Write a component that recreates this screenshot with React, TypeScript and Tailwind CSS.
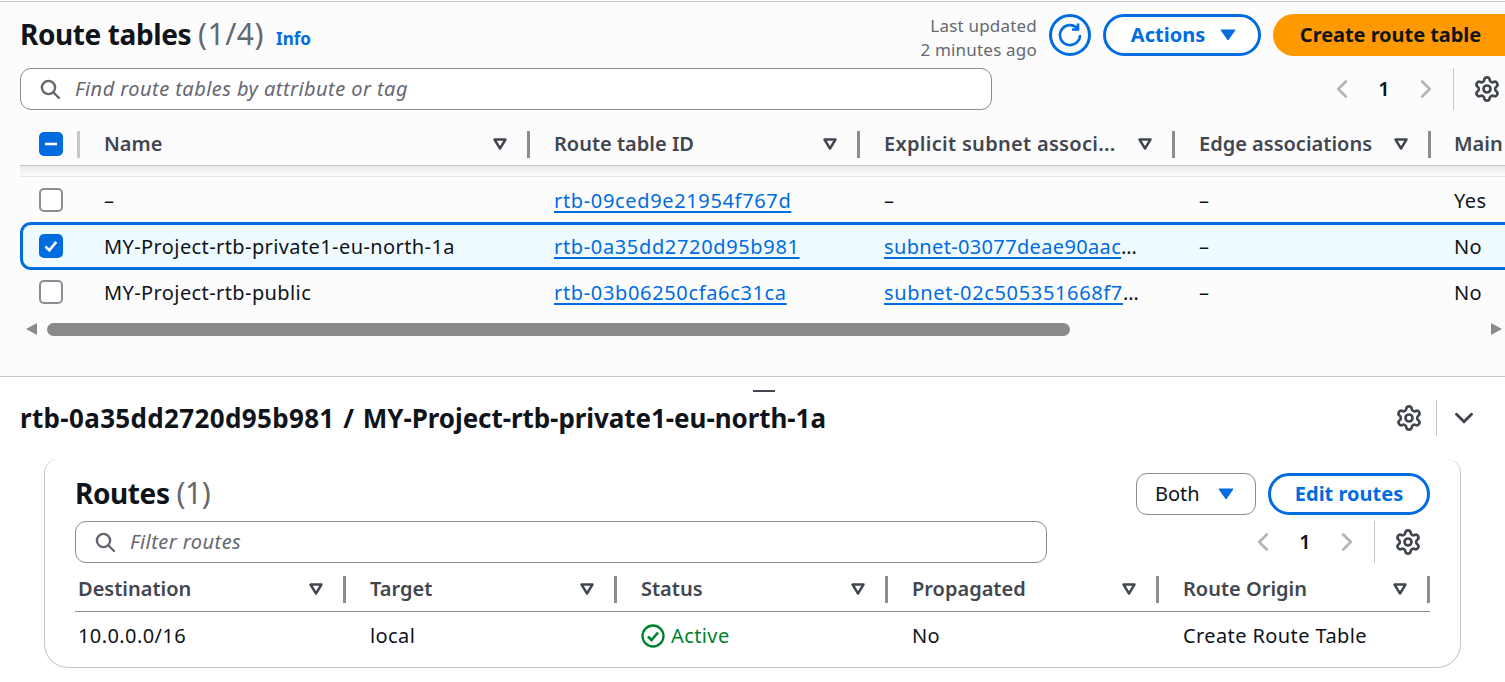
import { ChevronDown, ChevronLeft, ChevronRight, Settings } from "lucide-react";

const font = { fontFamily: '"Noto Sans", "Open Sans", sans-serif' };

function SearchIcon() {
  return (
    <svg width="22" height="22" viewBox="0 0 22 22" fill="none" stroke="#656871" strokeWidth="2.4">
      <circle cx="9.5" cy="9.5" r="6.6" />
      <path d="M14.5 14.5l5.5 5.5" strokeLinecap="round" />
    </svg>
  );
}

function SortCaret() {
  return (
    <svg width="14" height="12" viewBox="0 0 14 12" className="mb-[2px] shrink-0">
      <path d="M1.5 1.5h11L7 10.5z" fill="none" stroke="#424650" strokeWidth="2.4" strokeLinejoin="round" />
    </svg>
  );
}

function DropCaret() {
  return (
    <svg width="16" height="12" viewBox="0 0 16 12" className="shrink-0">
      <path d="M1 1h14L8 11z" fill="#006ce0" stroke="#006ce0" strokeLinejoin="round" />
    </svg>
  );
}

function Gear() {
  return <Settings size={28} strokeWidth={2.3} color="#424650" />;
}

function Pager() {
  return (
    <div className="flex items-center">
      <ChevronLeft size={30} strokeWidth={2.2} color="#b4b4bb" />
      <span className="w-[54px] text-center text-[20px] font-semibold text-[#0f141a]">1</span>
      <ChevronRight size={30} strokeWidth={2.2} color="#b4b4bb" />
    </div>
  );
}

function Check({ state }: { state?: "on" | "mixed" }) {
  if (!state) {
    return <span className="block h-6 w-6 rounded-[5px] border-2 border-[#8c8c94] bg-white" />;
  }
  return (
    <span className="flex h-6 w-6 items-center justify-center rounded-[5px] bg-[#006ce0]">
      <svg width="16" height="16" viewBox="0 0 16 16" fill="none" stroke="white" strokeWidth="2.6">
        {state === "on" ? <path d="M2.5 8.5l3.8 3.8 7-8.5" /> : <path d="M2 8h12" />}
      </svg>
    </span>
  );
}

function HeadCell({ label, className }: { label: string; className: string }) {
  return (
    <div className={`flex h-[27px] items-center justify-between border-r-[3px] border-[#8c8c94] pr-[20px] ${className}`}>
      <span className="mb-[2px] truncate text-[20px] font-semibold text-[#424650]">{label}</span>
      <SortCaret />
    </div>
  );
}

function A({ children, className = "tracking-[0.65px]" }: { children: string; className?: string }) {
  return (
    <span className={`block truncate ${className}`}>
      <span className="text-[#006ce0] underline underline-offset-[3px]">{children}</span>
    </span>
  );
}

const topCols = "grid grid-cols-[60px_450px_330px_315px_256px_1fr]";
const selectedCols = "grid grid-cols-[57px_450px_330px_315px_256px_1fr]";

function Row({ check, name, id, subnet, main, selected }: {
  check?: "on" | "mixed";
  name: string;
  id: string;
  subnet: string;
  main: string;
  selected?: boolean;
}) {
  return (
    <div
      className={`items-center text-[20px] tracking-[0.4px] text-[#0f141a] ${
        selected
          ? `${selectedCols} relative -my-px h-[48px] rounded-l-[11px] border-y-[3px] border-l-[3px] border-[#006ce0] bg-[#f0fbff]`
          : `${topCols} h-[46px]`
      }`}
    >
      <div className={selected ? "pl-[16px]" : "pl-[19px]"}><Check state={check} /></div>
      <div className="pl-[24px] pt-[2px]">{name}</div>
      <div className="pl-[24px] pt-[2px]">{id.startsWith("rtb") ? <A>{id}</A> : id}</div>
      <div className="pl-[24px] pr-[29px] pt-[2px]">
        {subnet.startsWith("subnet") ? <A className={selected ? "tracking-[0.35px]" : "tracking-[0.65px]"}>{subnet}</A> : subnet}
      </div>
      <div className="pl-[24px] pt-[2px]">–</div>
      <div className="pl-[23px] pt-[2px]">{main}</div>
    </div>
  );
}

const routeCols = "grid grid-cols-[271px_271px_271px_271px_271px]";

export default function App() {
  return (
    <div className="h-[682px] w-[1505px] overflow-hidden bg-white" style={font}>
      {/* top panel */}
      <div className="mt-px h-[376px] border-y border-[#c6c6cd] bg-[#fcfcfc]">
        <div className="flex h-[66px] items-start pl-5 pt-3">
          <h1 className="text-[28px] leading-[40px] font-bold tracking-[-0.4px] text-[#0f141a]">
            Route tables <span className="text-[30px] font-normal tracking-[0.5px] text-[#656871]">(1/4)</span>
          </h1>
          <span className="ml-3 mt-[13px] text-[17px] leading-[24px] font-bold text-[#006ce0]">Info</span>
          <div className="ml-auto flex items-start">
            <div className="text-right text-[17px] leading-[24px] tracking-[0.2px] text-[#656871]">
              <div>Last updated</div>
              <div>2 minutes ago</div>
            </div>
            <div className="ml-3 flex h-[42px] w-[42px] items-center justify-center rounded-full border-[3px] border-[#006ce0]">
              <svg width="26" height="26" viewBox="0 0 26 26" fill="none" stroke="#006ce0" strokeWidth="2.6">
                <path d="M20.5 6.5A10 10 0 1 0 23 13" />
                <path d="M21 1.5v6h-6" />
              </svg>
            </div>
            <div className="ml-3 flex h-[42px] w-[158px] items-center justify-center gap-[15px] rounded-full border-[3px] border-[#006ce0] bg-white pl-[3px] text-[20px] font-bold text-[#006ce0]">
              Actions
              <DropCaret />
            </div>
            <div className="ml-3 flex h-[42px] w-[232px] items-center justify-center rounded-l-full bg-[#ff9900] pl-[3px] text-[20px] font-bold tracking-[-0.05px] text-[#0f141a]">
              Create route table
            </div>
          </div>
        </div>

        <div className="flex h-[42px] items-center pl-5">
          <div className="flex h-[42px] w-[972px] items-center gap-[14px] rounded-[11px] border border-[#8c8c94] bg-white pl-[18px]">
            <SearchIcon />
            <span className="text-[20px] tracking-[0.45px] italic text-[#656871]">Find route tables by attribute or tag</span>
          </div>
          <div className="ml-[335px]"><Pager /></div>
          <div className="ml-[12px] h-[42px] border-l border-[#c6c6cd]" />
          <div className="ml-[19px]"><Gear /></div>
        </div>

        {/* table head */}
        <div className={`${topCols} ml-5 mt-[21px] h-[34px] items-start`}>
          <div className="flex h-[27px] items-center justify-between border-r-[3px] border-[#c6c6cd] pl-[19px]">
            <span className="mb-[2px]"><Check state="mixed" /></span>
          </div>
          <div className="pl-[24px]"><HeadCell label="Name" className="" /></div>
          <div className="pl-[24px]"><HeadCell label="Route table ID" className="" /></div>
          <div className="pl-[24px]"><HeadCell label="Explicit subnet associ..." className="tracking-[0.3px]" /></div>
          <div className="pl-[24px]"><HeadCell label="Edge associations" className="" /></div>
          <div className="pl-[23px]"><span className="text-[20px] leading-[25px] font-semibold text-[#424650]">Main</span></div>
        </div>
        <div className="ml-5 h-[12px] border-y border-t-[#c6c6cd] border-b-[#e8e8ec] bg-gradient-to-b from-[#e9e9ec] to-[#fcfcfc]" />

        <div className="ml-5">
          <Row name="–" id="rtb-09ced9e21954f767d" subnet="–" main="Yes" />
          <Row check="on" selected name="MY-Project-rtb-private1-eu-north-1a" id="rtb-0a35dd2720d95b981" subnet="subnet-03077deae90aac4d1f8e" main="No" />
          <Row name="MY-Project-rtb-public" id="rtb-03b06250cfa6c31ca" subnet="subnet-02c505351668f7a2b9c1" main="No" />
        </div>

        {/* scrollbar */}
        <div className="mt-[7px] flex h-[14px] items-center pl-[26px] pr-[3px]">
          <svg width="11" height="14" viewBox="0 0 11 14"><path d="M11 1v12L0 7z" fill="#8a8a8a" /></svg>
          <div className="ml-[10px] h-[13px] w-[1023px] rounded-full bg-[#8a8a8a]" />
          <svg width="11" height="14" viewBox="0 0 11 14" className="ml-auto"><path d="M0 1v12l11-6z" fill="#8a8a8a" /></svg>
        </div>
      </div>

      {/* split panel */}
      <div className="relative h-[305px]">
        <span className="absolute left-[753px] top-[13px] h-[2px] w-[22px] bg-[#424650]" />
        <div className="flex h-[82px] items-center pl-5 pr-[26px]">
          <h2 className="text-[26px] font-bold text-[#0f141a]">
            <span className="tracking-[0.34px]">rtb-0a35dd2720d95b981</span>
            <span className="mx-[2px] tracking-[-0.06px]"> / </span>
            <span className="tracking-[-0.06px]">MY-Project-rtb-private1-eu-north-1a</span>
          </h2>
          <div className="ml-auto"><Gear /></div>
          <div className="ml-[13px] h-[36px] border-l border-[#c6c6cd]" />
          <ChevronDown size={30} strokeWidth={2.3} color="#424650" className="ml-[12px]" />
        </div>

        <div className="ml-[44px] h-[209px] w-[1417px] rounded-b-[24px] rounded-t-[14px] border border-t-0 border-[#c6c6cd] px-[30px]">
          <div className="flex h-[62px] items-start pt-[14px]">
            <h3 className="text-[28px] leading-[40px] font-bold tracking-[-0.4px] text-[#0f141a]">
              Routes <span className="text-[30px] font-normal text-[#656871]">(1)</span>
            </h3>
            <div className="ml-auto flex items-center">
              <div className="flex h-[42px] w-[120px] items-center justify-between rounded-[11px] border border-[#8c8c94] pl-[18px] pr-[21px] text-[20px] text-[#0f141a]">
                Both
                <DropCaret />
              </div>
              <div className="ml-3 flex h-[42px] w-[162px] items-center justify-center rounded-full border-[3px] border-[#006ce0] text-[20px] font-bold text-[#006ce0]">
                Edit routes
              </div>
            </div>
          </div>

          <div className="flex h-[42px] items-center">
            <div className="flex h-[42px] w-[972px] items-center gap-[14px] rounded-[11px] border border-[#8c8c94] pl-[18px]">
              <SearchIcon />
              <span className="text-[20px] tracking-[0.45px] italic text-[#656871]">Filter routes</span>
            </div>
            <div className="ml-[201px]"><Pager /></div>
            <div className="ml-[12px] h-[42px] border-l border-[#c6c6cd]" />
            <div className="ml-[19px]"><Gear /></div>
          </div>

          <div className={`${routeCols} mt-[13px] h-[36px] items-start border-b border-[#8c8c94]`}>
            {["Destination", "Target", "Status", "Propagated", "Route Origin"].map((h, i) => (
              <div key={h} className={i === 0 ? "pl-[3px]" : "pl-[24px]"}>
                <HeadCell label={h} className="" />
              </div>
            ))}
          </div>
          <div className={`${routeCols} h-[47px] items-center text-[20px] tracking-[0.4px] text-[#0f141a]`}>
            <div className="pl-[3px]">10.0.0.0/16</div>
            <div className="pl-[24px]">local</div>
            <div className="flex items-center gap-[6px] pl-[24px] text-[#00802f]">
              <svg width="24" height="24" viewBox="0 0 24 24" fill="none" stroke="#00802f" strokeWidth="2.3">
                <circle cx="12" cy="12" r="10.5" />
                <path d="M7 12.5l3.5 3.5 6.5-7.5" strokeWidth="2.6" />
              </svg>
              Active
            </div>
            <div className="pl-[24px]">No</div>
            <div className="pl-[24px]">Create Route Table</div>
          </div>
        </div>
      </div>
    </div>
  );
}
